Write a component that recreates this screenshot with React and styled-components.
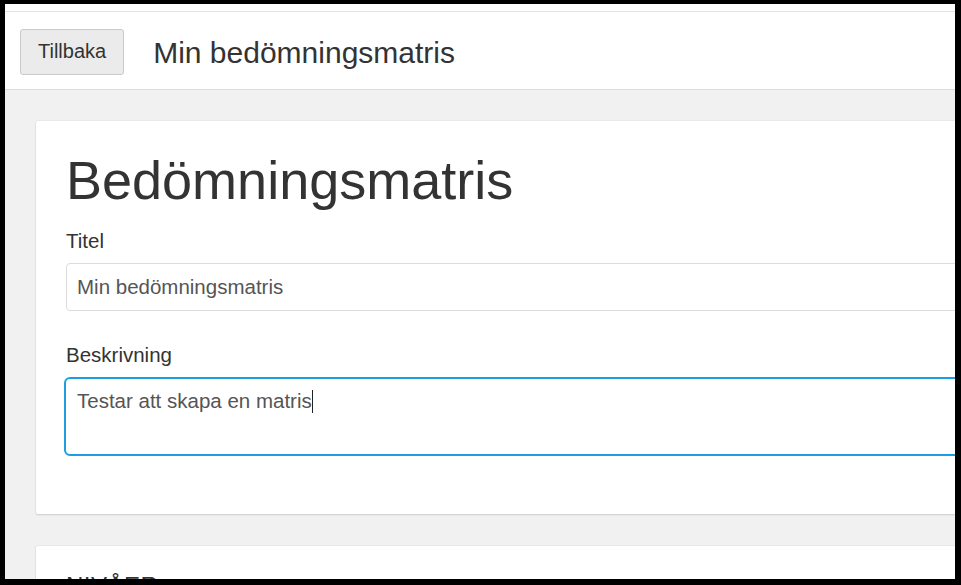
import React from "react";
import styled, { createGlobalStyle } from "styled-components";

const Global = createGlobalStyle`
  html, body { margin: 0; padding: 0; background: #000; }
  body { font-family: "Liberation Sans", Arial, sans-serif; }
  * { box-sizing: border-box; }
`;

const Frame = styled.div`
  width: 961px;
  height: 585px;
  border-style: solid;
  border-color: #000;
  border-width: 4px 6px 6px 5px;
  overflow: hidden;
  background: #f1f1f1;
`;

const Page = styled.div`
  width: 1080px;
  min-height: 100%;
  background: #f1f1f1;
  color: #333;
`;

const Header = styled.header`
  background: #fff;
  padding-top: 7px;
`;

const Navbar = styled.nav`
  height: 79px;
  display: flex;
  align-items: center;
  gap: 29px;
  padding: 0 15px;
  background: #fff;
  border-top: 1px solid #e4e4e4;
  border-bottom: 1px solid #dcdcdc;
`;

const BackButton = styled.button`
  height: 46px;
  padding: 0 17px;
  font-family: "Liberation Sans", Arial, sans-serif;
  font-size: 20px;
  color: #333;
  background: #ebebeb;
  border: 1px solid #c9c9c9;
  border-radius: 3px;
  margin-top: 2px;
`;

const PageTitle = styled.h1`
  margin: 0;
  font-size: 30px;
  font-weight: 400;
  color: #333;
  margin-top: 4px;
`;

const Main = styled.main`
  padding: 31px 31px;
  display: flex;
  flex-direction: column;
  gap: 32px;
`;

const Card = styled.section`
  background: #fff;
  border-radius: 2px;
  box-shadow: 0 1px 2px rgba(0, 0, 0, 0.12), 0 0 0 1px rgba(0, 0, 0, 0.03);
  padding: ${(p) => p.$pad || "30px 30px 28px"};
`;

const Heading = styled.h2`
  margin: 0 0 17px;
  font-size: 54px;
  line-height: 1.1;
  font-weight: 400;
  color: #333;
`;

const SectionHeading = styled.h3`
  margin: 0;
  font-size: 24px;
  line-height: 1;
  font-weight: 400;
  letter-spacing: 0.5px;
  color: #333;
  text-transform: uppercase;
`;

const Group = styled.div`
  margin-bottom: 30px;
`;

const Label = styled.label`
  display: block;
  font-size: 20.5px;
  line-height: 1.4;
  color: #333;
  margin-bottom: 7px;
`;

const TextInput = styled.div`
  height: 48px;
  display: flex;
  align-items: center;
  padding: 0 10px;
  font-size: 20.5px;
  color: #555;
  border: 1px solid #dcdcdc;
  border-radius: 4px;
  background: #fff;
`;

const TextArea = styled.div`
  height: 79px;
  margin-left: -2px;
  padding: 8px 11px;
  font-size: 20.5px;
  line-height: 1.4;
  color: #555;
  border: 2.5px solid #1d9ee3;
  border-radius: 6px;
  background: #fff;
`;

const Caret = styled.span`
  display: inline-block;
  width: 1.5px;
  height: 23px;
  background: #222;
  vertical-align: -5px;
`;

export default function App() {
  return (
    <>
      <Global />
      <Frame>
        <Page>
          <Header>
            <Navbar>
              <BackButton>Tillbaka</BackButton>
              <PageTitle>Min bedömningsmatris</PageTitle>
            </Navbar>
          </Header>
          <Main>
            <Card>
              <Heading>Bedömningsmatris</Heading>
              <Group>
                <Label>Titel</Label>
                <TextInput>Min bedömningsmatris</TextInput>
              </Group>
              <Group>
                <Label>Beskrivning</Label>
                <TextArea>
                  Testar att skapa en matris
                  <Caret />
                </TextArea>
              </Group>
            </Card>
            <Card $pad="28px 30px">
              <SectionHeading>Nivåer</SectionHeading>
            </Card>
          </Main>
        </Page>
      </Frame>
    </>
  );
}
